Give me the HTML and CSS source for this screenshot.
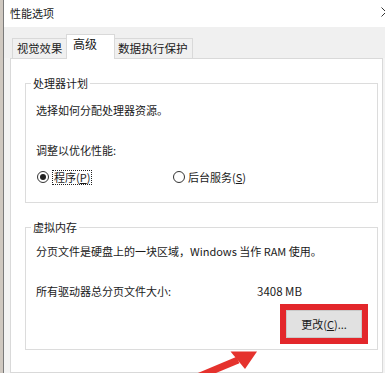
FILE: index.html
```html
<!DOCTYPE html>
<html lang="zh-CN">
<head>
<meta charset="utf-8">
<title>性能选项</title>
<link rel="stylesheet" href="styles.css">
</head>
<body>
<div class="backdrop"></div>
<div class="dialog">
  <div class="titlebar">
    <span class="title">性能选项</span>
    <svg class="close" width="10" height="10" viewBox="0 0 10 10"><path d="M0.5 0.5 L9.5 9.5 M9.5 0.5 L0.5 9.5" stroke="#333" stroke-width="1" fill="none"/></svg>
  </div>
  <div class="tabs">
    <div class="tab tab-visual">视觉效果</div>
    <div class="tab tab-active">高级</div>
    <div class="tab tab-dep">数据执行保护</div>
  </div>
  <div class="panel">
    <fieldset class="group group-cpu">
      <legend>处理器计划</legend>
      <p class="line">选择如何分配处理器资源。</p>
      <p class="line line-gap">调整以优化性能:</p>
      <div class="radios">
        <label class="radio radio-first"><span class="dot checked"></span><span class="focus">程序(<u>P</u>)</span></label>
        <label class="radio"><span class="dot"></span><span class="rlabel">后台服务(<u>S</u>)</span></label>
      </div>
    </fieldset>
    <fieldset class="group group-vm">
      <legend>虚拟内存</legend>
      <p class="line">分页文件是硬盘上的一块区域，Windows 当作 RAM 使用。</p>
      <div class="size-row">
        <span class="size-label">所有驱动器总分页文件大小:</span>
        <span class="size-value">3408 MB</span>
      </div>
      <div class="btn-row">
        <div class="highlight"><button class="btn">更改(<u>C</u>)...</button></div>
      </div>
    </fieldset>
  </div>
  <svg class="arrow" width="385" height="373" viewBox="0 0 385 373">
    <polygon points="193.6,374.8 236.6,356.8 239.4,363.2 196.4,381.2" fill="#e5322d"/>
    <polygon points="257,351.5 230.5,351.5 245,369" fill="#e5322d"/>
  </svg>
</div>
</body>
</html>
```

FILE: styles.css
```css
* { box-sizing: border-box; }
html, body { margin: 0; padding: 0; }
body {
  width: 385px;
  height: 373px;
  overflow: hidden;
  display: flex;
  background: #ffffff;
  font-family: "Noto Sans CJK SC", "Microsoft YaHei", sans-serif;
  font-size: 11px;
  color: #1a1a1a;
}
.backdrop {
  width: 4px;
  flex: none;
  background: #cfc8c0;
  border-right: 1px solid #7a7a7a;
}
.dialog {
  flex: 1;
  display: flex;
  flex-direction: column;
  background: #f3f3f3;
  overflow: hidden;
}
.titlebar {
  height: 27px;
  flex: none;
  background: #ffffff;
  display: flex;
  align-items: center;
  justify-content: space-between;
  padding-left: 6px;
  overflow: hidden;
}
.title { font-size: 11px; line-height: 14px; margin-top: -2px; }
.close { margin-right: -6px; margin-top: -3px; flex: none; }
.tabs {
  height: 31px;
  flex: none;
  display: flex;
  align-items: flex-end;
  padding-left: 8px;
  background: #f0f0f0;
}
.tab {
  height: 20px;
  border: 1px solid #d9d9d9;
  border-bottom: none;
  background: #f0f0f0;
  line-height: 18px;
  font-size: 11.3px;
  white-space: nowrap;
}
.tab-visual { width: 54px; padding-left: 4px; border-right: none; }
.tab-active {
  position: relative;
  z-index: 2;
  height: 25px;
  margin-bottom: -1px;
  width: 49px;
  padding-left: 6px;
  background: #ffffff;
  line-height: 18px;
  font-size: 12px;
}
.tab-dep { width: 78px; padding-left: 3px; border-left: none; font-size: 11.6px; }
.panel {
  flex: 1;
  background: #ffffff;
  border: 1px solid #d9d9d9;
  margin: 0 2px 0 6px;
  padding: 18px 4px 0 14px;
}
.group {
  margin: 0;
  border: 1px solid #dcdcdc;
  padding: 0 9px 0 10px;
  min-width: 0;
}
.group legend {
  padding: 0 2px;
  margin-left: -5px;
  line-height: 12px;
  height: 12px;
  font-size: 11px;
}
.line { margin: 0; line-height: 16px; white-space: nowrap; }
.group-cpu { padding-top: 13px; padding-bottom: 17px; }
.line-gap { margin-top: 24px; }
.radios {
  display: flex;
  align-items: center;
  margin-top: 11px;
  height: 16px;
}
.radio { display: flex; align-items: center; }
.radio-first { width: 136px; margin-left: 1px; }
.dot {
  width: 12px;
  height: 12px;
  border: 1px solid #333;
  border-radius: 50%;
  display: flex;
  align-items: center;
  justify-content: center;
  background: #fff;
  flex: none;
}
.dot.checked::after {
  content: "";
  width: 6px;
  height: 6px;
  border-radius: 50%;
  background: #222;
}
.focus {
  margin-left: 3px;
  border: 1px dotted #222;
  padding: 0 1px;
  line-height: 13px;
}
.rlabel { margin-left: 3px; line-height: 15px; }
.group-vm { margin-top: 18px; padding-top: 10px; padding-bottom: 5px; }
.size-row {
  display: flex;
  margin-top: 24px;
  line-height: 16px;
}
.size-label { width: 221px; flex: none; }
.size-value { font-size: 11.5px; }
.btn-row {
  display: flex;
  justify-content: flex-end;
  margin-top: 5px;
}
.highlight {
  border: 6px solid #e3272b;
  display: flex;
}
.btn {
  width: 76px;
  height: 28px;
  background: #e1e1e1;
  border: 1px solid #c9c9c9;
  font-family: "Noto Sans CJK SC", sans-serif;
  font-size: 11px;
  color: #1a1a1a;
  padding: 0;
  line-height: 16px;
}
.arrow {
  position: absolute;
  left: 0;
  top: 0;
  pointer-events: none;
}
```
